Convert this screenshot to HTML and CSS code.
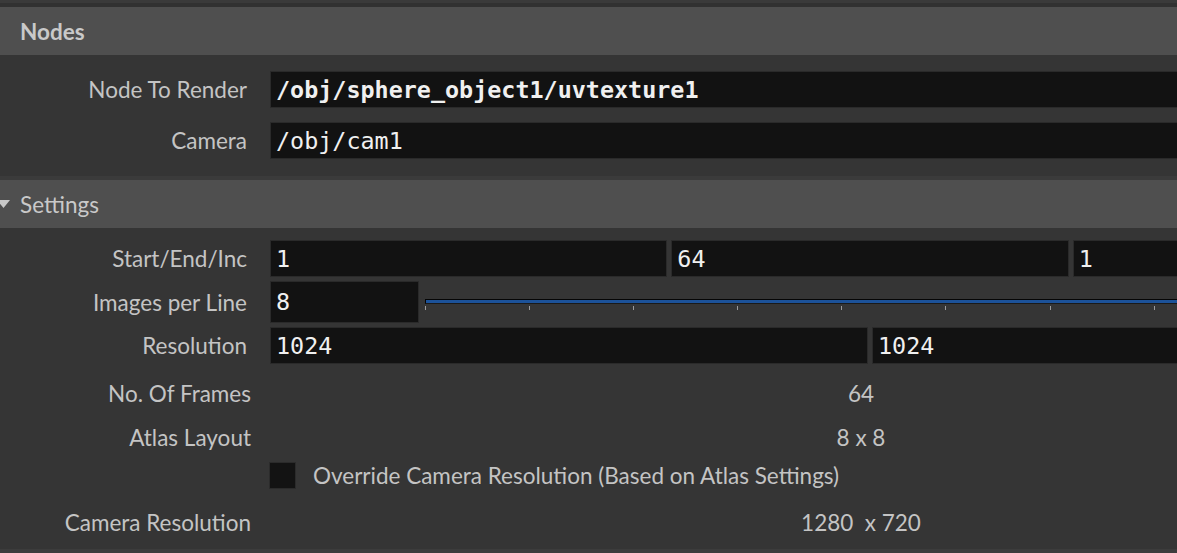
FILE: index.html
```html
<!DOCTYPE html>
<html>
<head>
<meta charset="utf-8">
<link rel="stylesheet" href="styles.css">
</head>
<body>
<div class="panel">
  <div class="topstrip"></div>
  <div class="folder"><span class="folder-title bold">Nodes</span></div>
  <div class="section nodes">
    <div class="row frow">
      <div class="label">Node To Render</div>
      <div class="fields"><div class="field mono bold">/obj/sphere_object1/uvtexture1</div></div>
    </div>
    <div class="row frow">
      <div class="label">Camera</div>
      <div class="fields"><div class="field mono">/obj/cam1</div></div>
    </div>
  </div>
  <div class="sep"></div>
  <div class="folder settings">
    <svg class="tri" width="12" height="10" viewBox="0 0 12 10"><polygon points="-3,1 10,1 3.5,9" fill="#c8c8c8"/></svg>
    <span class="folder-title">Settings</span>
  </div>
  <div class="section settings-body">
    <div class="row frow">
      <div class="label">Start/End/Inc</div>
      <div class="fields">
        <div class="field mono">1</div>
        <div class="field mono">64</div>
        <div class="field mono">1</div>
      </div>
    </div>
    <div class="row frow tall">
      <div class="label">Images per Line</div>
      <div class="fields">
        <div class="field mono small">8</div>
        <div class="slider">
          <div class="track"></div>
          <div class="ticks">
            <span></span><span></span><span></span><span></span><span></span><span></span><span></span><span></span><span></span><span></span><span></span>
          </div>
        </div>
      </div>
    </div>
    <div class="row frow">
      <div class="label">Resolution</div>
      <div class="fields">
        <div class="field mono">1024</div>
        <div class="field mono">1024</div>
      </div>
    </div>
    <div class="row vrow r-frames">
      <div class="label wide">No. Of Frames</div>
      <div class="value">64</div>
    </div>
    <div class="row vrow r-atlas">
      <div class="label wide">Atlas Layout</div>
      <div class="value">8 x 8</div>
    </div>
    <div class="row vrow r-check">
      <div class="label wide"></div>
      <div class="check-wrap">
        <div class="checkbox"></div>
        <span class="check-text">Override Camera Resolution (Based on Atlas Settings)</span>
      </div>
    </div>
    <div class="row vrow r-camres">
      <div class="label wide">Camera Resolution</div>
      <div class="value">1280&nbsp; x 720</div>
    </div>
  </div>
  <div class="bottomstrip"></div>
</div>
</body>
</html>
```
FILE: styles.css
```css
html, body {
  margin: 0;
  padding: 0;
  background: #353535;
  overflow: hidden;
}
body {
  font-family: "Lato", "Open Sans", sans-serif;
  color: #c4c4c4;
}
.panel {
  width: 1470px;
  display: flex;
  flex-direction: column;
}
.topstrip {
  height: 3px;
  background: #3a3a3a;
  border-bottom: 4px solid #313131;
}
.folder {
  height: 48px;
  background: #4f4f4f;
  display: flex;
  align-items: center;
  padding-left: 20px;
  font-size: 22.5px;
  color: #c9c9c9;
}
.folder-title.bold {
  font-weight: 700;
}
.settings {
  padding-left: 0;
}
.tri {
  display: block;
  margin-right: 8px;
}
.section {
  display: flex;
  flex-direction: column;
}
.nodes {
  padding: 16px 0 17px;
  gap: 14px;
}
.nodes .frow {
  margin-bottom: 0;
}
.sep {
  height: 4px;
  background: #3b3b3b;
}
.settings-body {
  padding: 12px 0 4px;
}
.row {
  display: flex;
  align-items: center;
}
.frow {
  height: 37px;
  margin-bottom: 4px;
}
.frow.tall {
  height: 42px;
}
.label {
  width: 247px;
  flex: none;
  text-align: right;
  font-size: 22.5px;
  margin-right: 23px;
  white-space: nowrap;
}
.label.wide {
  width: 251px;
  margin-right: 19px;
}
.fields {
  flex: 1;
  display: flex;
  gap: 4px;
  height: 100%;
  align-items: center;
}
.field {
  flex: 1;
  height: 100%;
  box-sizing: border-box;
  background: #121212;
  border: 1px solid #2a2a2a;
  color: #f0f0f0;
  display: flex;
  align-items: center;
  padding-left: 5px;
  white-space: nowrap;
  overflow: hidden;
}
.mono {
  font-family: "DejaVu Sans Mono", "Liberation Mono", monospace;
  font-size: 23.4px;
}
.field.bold {
  font-weight: 700;
}
.field.small {
  flex: none;
  width: 149px;
}
.slider {
  flex: 1;
  margin-left: 2px;
  margin-right: 3px;
  position: relative;
  height: 100%;
}
.track {
  position: absolute;
  left: 0;
  right: 0;
  top: 18px;
  height: 3px;
  background: #1c5299;
  border: 1px solid #050505;
  border-bottom-color: #1a1a1a;
}
.ticks {
  position: absolute;
  left: 0;
  right: 0;
  top: 25px;
  display: flex;
  justify-content: space-between;
}
.ticks span {
  width: 1px;
  height: 4px;
  background: #9a9a9a;
}
.vrow {
  font-size: 22.5px;
}
.value {
  flex: 1;
  text-align: center;
  padding-right: 18px;
}
.r-frames {
  height: 44px;
  margin-top: 3px;
}
.r-atlas {
  height: 44px;
}
.r-check {
  height: 33px;
}
.r-camres {
  height: 46px;
  margin-top: 7px;
}
.check-wrap {
  display: flex;
  align-items: center;
  gap: 17px;
  margin-left: -1px;
}
.checkbox {
  width: 25px;
  height: 25px;
  background: #131313;
  border: 1px solid #2b2b2b;
}
.bottomstrip {
  height: 6px;
  background: #3c3c3c;
}
```
